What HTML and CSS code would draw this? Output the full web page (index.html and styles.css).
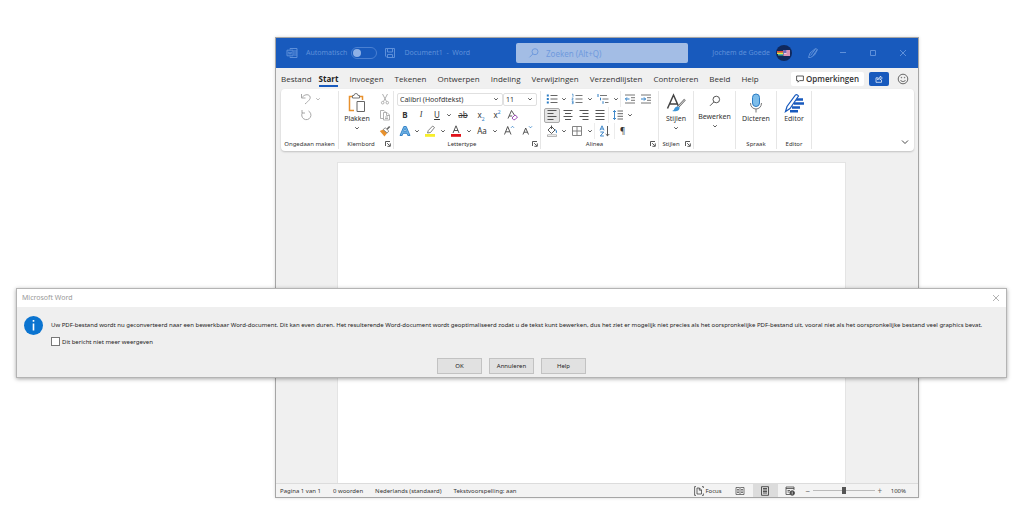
FILE: index.html
```html
<!DOCTYPE html>
<html lang="nl">
<head>
<meta charset="utf-8">
<meta name="viewport" content="width=device-width, initial-scale=1">
<title>Document1 - Word</title>
<link rel="stylesheet" href="styles.css">
</head>
<body>
<svg class="sprite" aria-hidden="true">
  <symbol id="chev" viewBox="0 0 6 6"><path d="M1.2 2.2 3 4l1.8-1.8" fill="none" stroke="currentColor" stroke-width=".8"/></symbol>
  <symbol id="launch" viewBox="0 0 6 6"><path d="M.5 5V.5H5M2.2 2.2l2.6 2.6M5.3 2.4v2.9H2.4" fill="none" stroke="#444" stroke-width=".9"/></symbol>
</svg>

<main class="desktop">
  <section class="word" aria-label="Word">
    <header class="titlebar">
      <div class="title-left">
        <svg class="i12" viewBox="0 0 12 12" fill="none" stroke="currentColor"><path d="M4 2.5V1.5h7v9H4v-1M7.5 4H11M7.5 6H11M7.5 8H11"/><path d="M1 3.200h6v5.600H1z"/><path d="m2.300 4.700.8 2.700.9-2.500.9 2.500.8-2.700" stroke-width=".8"/></svg>
        <label class="autosave" for="autosave">Automatisch</label>
        <input class="switch" id="autosave" type="checkbox">
        <svg class="i12" viewBox="0 0 12 12" fill="none" stroke="currentColor"><path d="M1.500 1.500h9v9H3l-1.500-1.500zM3.500 1.500v3.500h5V1.500M3.500 10.500V7.500h5v3"/></svg>
        <span class="docname">Document1&nbsp; -&nbsp; Word</span>
      </div>
      <label class="search">
        <svg class="i12" viewBox="0 0 12 12" fill="none" stroke="currentColor"><circle cx="7" cy="4.700" r="3"/><path d="M4.800 7 1.500 10.300"/></svg>
        <input type="text" placeholder="Zoeken (Alt+Q)" aria-label="Zoeken">
      </label>
      <div class="title-right">
        <span class="user">Jochem de Goede</span>
        <svg class="avatar" viewBox="0 0 16 16"><circle cx="8" cy="8" r="8" fill="#10285c"/><path d="M1 6h6v1.500H1z" fill="#e8493a"/><path d="M1 7.500h6V9H1z" fill="#f4df3c"/><path d="M2 9h5v1.500H2z" fill="#4bb9a5"/><path d="M7.500 5H14v6H7.500z" fill="#e7d2e6"/><path d="M7.500 5h3v3h-3z" fill="#7166b8"/><path d="M10.500 6H14M10.500 8H14M7.500 10H14" stroke="#d2527f"/></svg>
        <button class="cap" aria-label="Pen"><svg class="i12" viewBox="0 0 12 12" fill="none" stroke="currentColor"><path d="M1.500 10.500 3 6l5.500-4.500 2 1L7.500 8l-4 2.500zM3.500 8.500 8.500 2M6 8.500l4-5.500"/></svg></button>
        <button class="cap" aria-label="Minimaliseren"><svg class="i8" viewBox="0 0 8 8" fill="none" stroke="currentColor"><path d="M1 3.500h6"/></svg></button>
        <button class="cap" aria-label="Maximaliseren"><svg class="i8" viewBox="0 0 8 8" fill="none" stroke="currentColor"><path d="M1.500 1.500h5v5h-5z"/></svg></button>
        <button class="cap" aria-label="Sluiten"><svg class="i8" viewBox="0 0 8 8" fill="none" stroke="currentColor"><path d="m1 1 6 6M7 1 1 7"/></svg></button>
      </div>
    </header>

    <nav class="tabs">
      <div class="tablist">
        <a href="#bestand">Bestand</a><a href="#start" class="active">Start</a><a href="#invoegen">Invoegen</a><a href="#tekenen">Tekenen</a><a href="#ontwerpen">Ontwerpen</a><a href="#indeling">Indeling</a><a href="#verwijzingen">Verwijzingen</a><a href="#verzendlijsten">Verzendlijsten</a><a href="#controleren">Controleren</a><a href="#beeld">Beeld</a><a href="#help">Help</a>
      </div>
      <button class="comments"><svg class="i8" viewBox="0 0 8 8" fill="none" stroke="#333" stroke-width=".8"><path d="M.6 1h6.800v4.600H3.600L2 7.200V5.600H.6z"/></svg>Opmerkingen</button>
      <button class="share" aria-label="Delen"><svg class="i8" viewBox="0 0 8 8" fill="none" stroke="#fff" stroke-width=".7"><path d="M3 2.800H1v4.500h5.500V5M2.500 5c.3-1.800 1.300-2.500 2.800-2.600V1l2 2-2 2V3.700C4 3.700 3.200 4 2.500 5z"/></svg></button>
      <button class="smile" aria-label="Feedback"><svg class="i12" viewBox="0 0 12 12" fill="none" stroke="#444" stroke-width=".8"><circle cx="6" cy="6" r="4.800"/><path d="M3.500 7c.8 2 4.200 2 5 0"/><circle cx="4.400" cy="4.600" r=".3"/><circle cx="7.600" cy="4.600" r=".3"/></svg></button>
    </nav>

    <div class="ribbon">
      <section class="group g-undo">
        <div class="body stack">
          <div class="row dim">
            <button class="t16" aria-label="Ongedaan maken"><svg class="i12" viewBox="0 0 12 12" fill="none" stroke="currentColor"><path d="M1.500 1v4h4M1.800 4.800C4 1.500 8 .8 9.700 3c1.600 2.500-.7 4.500-4.700 8"/></svg></button>
            <button class="t8" aria-label="Meer"><svg class="i6"><use href="#chev"/></svg></button>
          </div>
          <div class="row dim">
            <button class="t16" aria-label="Herhalen"><svg class="i12" viewBox="0 0 12 12" fill="none" stroke="currentColor"><path d="M2 1v3h3M8.500 2A4.600 4.600 0 1 1 2.500 3.500"/></svg></button>
          </div>
        </div>
        <footer><span>Ongedaan maken</span></footer>
      </section>

      <section class="group g-clip">
        <div class="body split">
          <button class="big"><svg class="i20" viewBox="0 0 20 20" fill="none"><path d="M7 17.500H2.500v-14h3M12.500 3.500h3V7" stroke="#e8912d" stroke-width="1.500"/><path d="M5.500 5V2.500H7a2 2 0 0 1 4 0h1.500V5z" fill="#fff" stroke="#777"/><path d="M10 8.500h7.500v10H10z" fill="#fff" stroke="#666"/></svg><span>Plakken</span><svg class="i6"><use href="#chev"/></svg></button>
          <div class="stack">
            <button class="t16 dim" aria-label="Knippen"><svg class="i12" viewBox="0 0 12 12" fill="none" stroke="currentColor" stroke-width=".9"><path d="m3.500 1 4 7.500M8.500 1l-4 7.500"/><circle cx="3.700" cy="9.700" r="1.300"/><circle cx="8.300" cy="9.700" r="1.300"/></svg></button>
            <button class="t16 dim" aria-label="Kopiëren"><svg class="i12" viewBox="0 0 12 12" fill="none" stroke="currentColor" stroke-width=".9"><path d="M4.500 9.500h-3v-8H5L6.500 3M4.500 3.500h3.500L10.500 6v5h-6zM7.500 3.500V6.500h3M6 8h3M6 9.500h3"/></svg></button>
            <button class="t16" aria-label="Opmaak kopiëren"><svg class="i12" viewBox="0 0 12 12"><path d="m.8 6 3.400-1.500 4 3.500-2.700 3.500z" fill="#e8912d"/><path d="m4.200 4.500 2-1.700L9.800 6 8.200 8z" fill="#fff" stroke="#666" stroke-width=".7"/><path d="m8 4.300 2.700-2.800" stroke="#666" stroke-width="1.600"/></svg></button>
          </div>
        </div>
        <footer><span>Klembord</span><button class="launch" aria-label="Klembord openen"><svg class="i6"><use href="#launch"/></svg></button></footer>
      </section>

      <section class="group g-font">
        <div class="body stack">
          <div class="row combos">
            <span class="combo wide"><select aria-label="Lettertype"><option>Calibri (Hoofdtekst)</option></select><svg class="i6"><use href="#chev"/></svg></span>
            <span class="combo"><select aria-label="Tekengrootte"><option>11</option></select><svg class="i6"><use href="#chev"/></svg></span>
          </div>
          <div class="row">
            <button class="t16"><b>B</b></button>
            <button class="t16 serif"><i>I</i></button>
            <button class="t16"><u>U</u></button>
            <button class="t8" aria-label="Onderstreping"><svg class="i6"><use href="#chev"/></svg></button>
            <button class="t20"><s>ab</s></button>
            <button class="t16"><span>x<sub>2</sub></span></button>
            <button class="t16"><span>x<sup>2</sup></span></button>
            <button class="t16" aria-label="Opmaak wissen"><svg class="i12" viewBox="0 0 12 12" fill="none"><path d="M1 9.500 4.500 1.500 8 7M2.200 7h3" stroke="#444" stroke-width=".9"/><path d="m5 9 3-3 2.500 2L8 10.700H6.500z" fill="#fff" stroke="#9a4bb5"/></svg></button>
          </div>
          <div class="row">
            <button class="t16" aria-label="Teksteffecten"><svg class="i12" viewBox="0 0 12 12"><path d="M1 10.500 4.800 1.500h2.400l3.800 9H8.800L8 8.300H4L3.200 10.500z" fill="#6fb4e6" stroke="#2b7cc4" stroke-width=".9"/><path d="M4.700 6.500 6 3.500l1.300 3z" fill="#fff" stroke="#2b7cc4" stroke-width=".7"/></svg></button>
            <button class="t8" aria-label="Meer effecten"><svg class="i6"><use href="#chev"/></svg></button>
            <button class="t18" aria-label="Markeren"><svg class="i12" viewBox="0 0 12 12"><path d="M1 9h10v2.800H1z" fill="#f7ee2b"/><path d="m3.500 8 .8-2.500L8.700 1l1.800 1.500-4 5z" fill="#fff" stroke="#666" stroke-width=".8"/></svg></button>
            <button class="t8" aria-label="Markeerkleur"><svg class="i6"><use href="#chev"/></svg></button>
            <button class="t18" aria-label="Tekstkleur"><svg class="i12" viewBox="0 0 12 12"><path d="M1 9h10v2.800H1z" fill="#e0131b"/><path d="M3 8 6 .8 9 8M4 5.500h4" fill="none" stroke="#444" stroke-width=".9"/></svg></button>
            <button class="t8" aria-label="Kleur kiezen"><svg class="i6"><use href="#chev"/></svg></button>
            <button class="t18">Aa</button>
            <button class="t8" aria-label="Hoofdlettergebruik"><svg class="i6"><use href="#chev"/></svg></button>
            <button class="t20" aria-label="Groter"><svg class="i12" viewBox="0 0 12 12" fill="none"><path d="M1.500 9.500 4.700 1.500 8 9.500M2.700 6.800h4" stroke="#444" stroke-width=".9"/><path d="m8 2.800 1.500-1.500L11 2.800" stroke="#2b7cc4" stroke-width=".8"/></svg></button>
            <button class="t16" aria-label="Kleiner"><svg class="i12" viewBox="0 0 12 12" fill="none"><path d="M2 9.500 4.700 3l2.800 6.500M3 7.200h3.500" stroke="#444" stroke-width=".9"/><path d="m8 1.300 1.500 1.500L11 1.300" stroke="#2b7cc4" stroke-width=".8"/></svg></button>
          </div>
        </div>
        <footer><span>Lettertype</span><button class="launch" aria-label="Lettertype openen"><svg class="i6"><use href="#launch"/></svg></button></footer>
      </section>

      <section class="group g-para">
        <div class="body stack">
          <div class="row">
            <button class="t16" aria-label="Opsommingstekens"><svg class="i12" viewBox="0 0 12 12"><path d="M4.500 2.500h7M4.500 6h7M4.500 9.500h7" stroke="#666"/><path d="M.8 1.500h2v2h-2zM.8 5h2v2h-2zM.8 8.500h2v2h-2z" fill="#2b7cc4"/></svg></button>
            <button class="t8" aria-label="Meer opsommingstekens"><svg class="i6"><use href="#chev"/></svg></button>
            <button class="t18" aria-label="Nummering"><svg class="i12" viewBox="0 0 12 12"><path d="M4.500 2.500h7M4.500 6h7M4.500 9.500h7" stroke="#777"/><path d="M1 1.200h1v2.600M.8 5h1.400L.9 7h1.500M.8 8.300h1.400v2.400H.8M1 9.500h1" stroke="#2b7cc4" stroke-width=".7" fill="none"/></svg></button>
            <button class="t8" aria-label="Meer nummering"><svg class="i6"><use href="#chev"/></svg></button>
            <button class="t18" aria-label="Lijst met meerdere niveaus"><svg class="i12" viewBox="0 0 12 12"><path d="M3 2.500h7M5.500 6h6M8 9.500h3.500" stroke="#777"/><path d="M1 1v3M3.500 4.700v2.600M6 8.200v2.600" stroke="#2b7cc4"/></svg></button>
            <button class="t8" aria-label="Meer niveaus"><svg class="i6"><use href="#chev"/></svg></button>
            <button class="t18 rule" aria-label="Inspringing verkleinen"><svg class="i12" viewBox="0 0 12 12" fill="none"><path d="M1 2h10M7 4.700h4M7 7.300h4M1 10h10" stroke="#777"/><path d="M5.500 6H1.500M3 4.400 1.400 6 3 7.600" stroke="#2b7cc4"/></svg></button>
            <button class="t16" aria-label="Inspringing vergroten"><svg class="i12" viewBox="0 0 12 12" fill="none"><path d="M1 2h10M7 4.700h4M7 7.300h4M1 10h10" stroke="#777"/><path d="M1 6h4.500M4 4.400 5.600 6 4 7.600" stroke="#2b7cc4"/></svg></button>
          </div>
          <div class="row">
            <button class="t16 pressed" aria-label="Links uitlijnen"><svg class="i12" viewBox="0 0 12 12" stroke="#555"><path d="M1.500 1.500h9M1.500 4.500h6M1.500 7.500h9M1.500 10.500h6"/></svg></button>
            <button class="t16" aria-label="Centreren"><svg class="i12" viewBox="0 0 12 12" stroke="#555"><path d="M1.500 1.500h9M3 4.500h6M1.500 7.500h9M3 10.500h6"/></svg></button>
            <button class="t16" aria-label="Rechts uitlijnen"><svg class="i12" viewBox="0 0 12 12" stroke="#555"><path d="M1.500 1.500h9M4.500 4.500h6M1.500 7.500h9M4.500 10.500h6"/></svg></button>
            <button class="t16" aria-label="Uitvullen"><svg class="i12" viewBox="0 0 12 12" stroke="#555"><path d="M1.500 1.500h9M1.500 4.500h9M1.500 7.500h9M1.500 10.500h9"/></svg></button>
            <button class="t18 rule" aria-label="Regelafstand"><svg class="i12" viewBox="0 0 12 12" fill="none"><path d="M5.500 2H11M5.500 4.700H11M5.500 7.300H11M5.500 10H11" stroke="#666"/><path d="M2.500 1.500v9M1 3l1.500-1.500L4 3M1 9l1.500 1.500L4 9" stroke="#2b7cc4" stroke-width=".9"/></svg></button>
            <button class="t8" aria-label="Meer regelafstand"><svg class="i6"><use href="#chev"/></svg></button>
          </div>
          <div class="row">
            <button class="t16" aria-label="Arcering"><svg class="i12" viewBox="0 0 12 12" fill="none"><path d="M1.500 9.800h9v1.700h-9z" fill="#fff" stroke="#888" stroke-width=".6"/><path d="m2 5 3.500-3.500L9 5 5.500 8.500zM5.500 4V.5" stroke="#444" stroke-width=".9"/><path d="M9.500 4.500c1.500 2 1 3.500.5 3.500" stroke="#2b7cc4"/></svg></button>
            <button class="t8" aria-label="Arceringskleur"><svg class="i6"><use href="#chev"/></svg></button>
            <button class="t18" aria-label="Randen"><svg class="i12" viewBox="0 0 12 12" fill="none" stroke="#777" stroke-width=".9"><path d="M1.500 1.500h9v9h-9zM6 1.500v9M1.500 6h9"/></svg></button>
            <button class="t8" aria-label="Meer randen"><svg class="i6"><use href="#chev"/></svg></button>
            <button class="t20 rule" aria-label="Sorteren"><svg class="i12" viewBox="0 0 12 12" fill="none"><path d="M1 5.300 3 .8l2 4.500M1.700 4h2.600M1.300 7h3.400L1.300 11h3.600" stroke="#2b7cc4" stroke-width=".9"/><path d="M8.500 1v9.700M6.700 9l1.800 1.800L10.300 9" stroke="#444" stroke-width=".9"/></svg></button>
            <button class="t16 rule">¶</button>
          </div>
        </div>
        <footer><span>Alinea</span><button class="launch" aria-label="Alinea openen"><svg class="i6"><use href="#launch"/></svg></button></footer>
      </section>

      <section class="group g-style">
        <div class="body"><button class="big"><svg class="i20" viewBox="0 0 20 20" fill="none"><path d="M1.500 15.500 7.500 2l5.300 12M3.700 11h7.700" stroke="#444" stroke-width="1.500"/><path d="M19 6.500 12 14" stroke="#666" stroke-width="2.200"/><path d="M19 6.500 12 14" stroke="#fff" stroke-width=".8"/><path d="M13.500 14.500c.5 3-3 4.500-7.500 3.500 2-.5 2-2 3.200-3.500 1.300-1.400 3.500-1.200 4.300 0z" fill="#3d94d6"/></svg><span>Stijlen</span><svg class="i6"><use href="#chev"/></svg></button></div>
        <footer><span>Stijlen</span><button class="launch" aria-label="Stijlen openen"><svg class="i6"><use href="#launch"/></svg></button></footer>
      </section>
      <section class="group g-edit">
        <div class="body"><button class="big small"><svg class="i12" viewBox="0 0 12 12" fill="none" stroke="#444" stroke-width=".9"><circle cx="7.300" cy="4.500" r="3.300"/><path d="M4.900 6.900 1 10.800"/></svg><span>Bewerken</span><svg class="i6"><use href="#chev"/></svg></button></div>
        <footer></footer>
      </section>
      <section class="group g-talk">
        <div class="body"><button class="big"><svg class="i20" viewBox="0 0 20 20" fill="none"><rect x="6.500" y="1" width="7" height="12.500" rx="3.500" fill="#7dbdea" stroke="#2b7cc4"/><path d="M4.500 10c0 8 11 8 11 0M10 16v3.500" stroke="#777"/></svg><span>Dicteren</span></button></div>
        <footer><span>Spraak</span></footer>
      </section>
      <section class="group g-editor">
        <div class="body"><button class="big"><svg class="i20" viewBox="0 0 20 20" fill="none"><path d="M12 6.500h7M10 10.500h10M8 14.500h8M6 18.300h8" stroke="#185abd" stroke-width="2.600"/><path d="M1.500 18.500 3 13.500 11.500 2q1.500-1 3 1L6 15.500z" fill="#fff" stroke="#185abd" stroke-width="1.200"/></svg><span>Editor</span></button></div>
        <footer><span>Editor</span></footer>
      </section>
      <button class="collapse" aria-label="Lint samenvouwen"><svg class="i8" viewBox="0 0 8 8" fill="none" stroke="#333" stroke-width=".9"><path d="m1 2.500 3 3 3-3"/></svg></button>
    </div>

    <div class="canvas"><div class="page"></div></div>

    <footer class="status">
      <span>Pagina 1 van 1</span><span>0 woorden</span><span>Nederlands (standaard)</span><span>Tekstvoorspelling: aan</span>
      <div class="status-right">
        <button class="focus"><svg class="i10" viewBox="0 0 10 10" fill="none" stroke="#444" stroke-width=".8"><path d="M2 .6H.6V9.400H2M8 9.400h1.400V7.500M8 .6h1.400V2M3 2h2.500L7.500 4v4H3zM5.300 2v2.200h2.200"/></svg>Focus</button>
        <button class="view" aria-label="Leesmodus"><svg class="i10" viewBox="0 0 10 10" fill="none" stroke="#555" stroke-width=".8"><path d="M1 1.500h3.500L5 2l.5-.5H9v7H5.500L5 9l-.5-.5H1zM5 2v7M2 3.500h2M2 5h2M2 6.500h2M6 3.500h2M6 5h2M6 6.500h2"/></svg></button>
        <button class="view on" aria-label="Afdrukweergave"><svg class="i10" viewBox="0 0 10 10" fill="none" stroke="#444" stroke-width=".9"><path d="M1.500.7h7v8.600h-7zM3 2.500h4M3 4h4M3 5.500h4M3 7h4"/></svg></button>
        <button class="view" aria-label="Weblay-out"><svg class="i10" viewBox="0 0 10 10" fill="none" stroke="#444" stroke-width=".8"><path d="M5 8.500H1v-7.500h8v3M1 2.500h8M2.500 4.500h2.500M2.500 6h2"/><circle cx="7.200" cy="7" r="2.300" fill="#444"/><path d="M7.200 5.500v3" stroke="#ddd"/></svg></button>
        <button class="zoom" aria-label="Uitzoomen">−</button>
        <input class="slider" type="range" min="0" max="100" value="50" aria-label="Zoom">
        <button class="zoom" aria-label="Inzoomen">+</button>
        <span class="pct">100%</span>
      </div>
    </footer>
  </section>

  <section class="dialog" role="dialog" aria-label="Microsoft Word">
    <header class="dlg-title"><span>Microsoft Word</span><button class="dlg-close" aria-label="Sluiten"><svg class="i8" viewBox="0 0 8 8" fill="none" stroke="#aaa" stroke-width=".9"><path d="m1 1 6 6M7 1 1 7"/></svg></button></header>
    <div class="dlg-main">
      <svg class="info" viewBox="0 0 19 19"><circle cx="9.500" cy="9.500" r="9.500" fill="#0b74d0"/><path d="M9.500 7.500v7M9.500 4v1.800" stroke="#fff" stroke-width="1.600"/></svg>
      <div class="dlg-text">
        <p>Uw PDF-bestand wordt nu geconverteerd naar een bewerkbaar Word-document. Dit kan even duren. Het resulterende Word-document wordt geoptimaliseerd zodat u de tekst kunt bewerken, dus het ziet er mogelijk niet precies als het oorspronkelijke PDF-bestand uit, vooral niet als het oorspronkelijke bestand veel graphics bevat.</p>
        <label class="check"><input type="checkbox">Dit bericht niet meer weergeven</label>
      </div>
    </div>
    <div class="dlg-actions"><button>OK</button><button>Annuleren</button><button>Help</button></div>
  </section>
</main>
</body>
</html>
```
FILE: styles.css
```css
* { box-sizing: border-box; }
body { margin: 0; background: #fff; color: #333; font: 6px/8px "Noto Sans", "Open Sans", sans-serif; }
button, input, select { font: inherit; color: inherit; margin: 0; padding: 0; border: 0; background: none; }
button { display: flex; align-items: center; justify-content: center; }
svg { display: block; flex: none; overflow: visible; }
.sprite { position: absolute; width: 0; height: 0; }
.i6 { width: 6px; height: 6px; }
.i8 { width: 8px; height: 8px; }
.i10 { width: 10px; height: 10px; }
.i12 { width: 12px; height: 12px; }
.i20 { width: 20px; height: 20px; }

.desktop { position: relative; display: flex; min-height: 100vh; padding: 37px 105px 28px 275px; overflow: hidden; }
.word { flex: 1; min-width: 0; display: flex; flex-direction: column; background: #f0f0f0; border: 1px solid #a6a6a6; box-shadow: 0 0 3px rgba(0,0,0,.15); }

.titlebar { display: grid; grid-template-columns: 1fr 172px 1fr; align-items: center; height: 30px; padding-left: 10px; background: #185abd; color: #5e90da; font-size: 7px; }
.title-left, .title-right { display: flex; align-items: center; white-space: nowrap; }
.autosave { margin-left: 8px; }
.switch { appearance: none; width: 26px; height: 12px; margin: 0 7px 0 4px; border: 1px solid #4a80d2; border-radius: 6px; display: flex; align-items: center; }
.switch::before { content: ""; width: 8px; height: 8px; margin-left: 1px; border-radius: 4px; background: #8fb1e6; }
.docname { margin-left: 8px; }
.search { display: flex; align-items: center; gap: 6px; height: 20px; padding: 0 12px; border-radius: 2px; background: #a3bde5; color: #6f9add; }
.search input { flex: 1; min-width: 0; font-size: 8px; }
.search input::placeholder { color: #6f9add; opacity: 1; }
.title-right { justify-content: flex-end; }
.avatar { width: 16px; height: 16px; margin: 0 6px 0 6px; }
.cap { width: 30px; height: 30px; }

.tabs { display: flex; align-items: center; height: 21px; padding: 0 9px 0 5px; font-family: "Open Sans", "Noto Sans", sans-serif; font-size: 8px; line-height: 12px; }
.tablist { display: flex; flex: 1; gap: 11px; }
.tabs a { color: #333; text-decoration: none; border-bottom: 2px solid transparent; padding-top: 2px; }
.tabs a:first-child { margin-right: -4px; }
.tabs a.active { font-weight: 700; border-color: #185abd; color: #222; }
.comments { height: 14px; gap: 2px; padding: 0 5px; background: #fff; border-radius: 2px; font-weight: 600; }
.share { width: 20px; height: 14px; margin: 0 8px 0 5px; border-radius: 2px; background: #185abd; }

.ribbon { display: flex; height: 62px; margin: 0 4px 0 5px; background: #fff; border-radius: 4px; box-shadow: 0 1px 2px rgba(0,0,0,.2); }
.group { display: flex; flex-direction: column; flex: none; margin: 2px 0; border-right: 1px solid #e6e6e6; }
.g-undo { width: 58px; }
.g-clip { width: 55px; }
.g-font { width: 147px; }
.g-para { width: 118px; }
.g-style { width: 35px; }
.g-edit { width: 42px; }
.g-talk { width: 41px; }
.g-editor { width: 35px; }
.body { flex: 1; }
.stack { display: flex; flex-direction: column; }
.split { display: flex; justify-content: space-between; padding-left: 2px; }
.group footer { display: flex; align-items: center; justify-content: center; height: 10px; white-space: nowrap; }
.group footer span { flex: 1; text-align: center; }
.launch { width: 10px; height: 8px; }
.row { display: flex; align-items: center; height: 16px; padding-left: 3px; font-size: 8px; }
.g-undo .row { padding-left: 17px; }
.t8, .t16, .t18, .t20 { height: 16px; flex: none; white-space: nowrap; }
.t8 { width: 8px; }
.t16 { width: 16px; }
.t18 { width: 18px; }
.t20 { width: 20px; }
.dim { color: #a8a8a8; }
.serif { font-family: "Liberation Serif", serif; }
.rule { border-left: 1px solid #ececec; }
.pressed { height: 15px; background: #e6e6e6; border: 1px solid #aaa; border-radius: 2px; }
sub, sup { font-size: 5px; line-height: 0; color: #2b7cc4; }
.combo { display: flex; align-items: center; width: 34px; height: 13px; padding: 0 3px 0 2px; border: 1px solid #e0e0e0; border-radius: 2px; }
.combo.wide { width: 106px; }
.combo select { appearance: none; flex: 1; min-width: 0; height: 11px; font-size: 7px; line-height: 11px; }
.big { flex-direction: column; justify-content: flex-start; width: 100%; padding-top: 2px; font-size: 7px; line-height: 10px; white-space: nowrap; }
.split .big { width: 32px; }
.big span { margin: 1px 0; }
.big.small { padding-top: 4px; }
.small span { margin-top: 5px; }
.collapse { align-self: flex-end; width: 18px; height: 18px; margin-left: auto; }

.canvas { flex: 1; display: flex; padding: 11px 72px 0 61px; }
.page { flex: 1; background: #fff; border: 1px solid #e4e4e4; border-bottom: 0; }

.status { display: flex; align-items: center; gap: 12px; height: 14px; padding-left: 4px; background: #f3f3f3; border-top: 1px solid #dcdcdc; white-space: nowrap; }
.status-right { display: flex; align-items: center; height: 100%; margin-left: auto; padding-right: 12px; }
.focus { gap: 1px; margin-right: 6px; }
.view { width: 25px; height: 100%; }
.view.on { background: #dcdcdc; }
.zoom { width: 10px; font-size: 8px; color: #666; }
.slider { appearance: none; width: 62px; height: 8px; background: linear-gradient(#bbb, #bbb) center / 100% 1px no-repeat; }
.slider::-webkit-slider-thumb { appearance: none; width: 4px; height: 7px; background: #555; }
.pct { margin-left: 6px; }

.dialog { position: absolute; left: 16px; right: 17px; top: 288px; background: #efefef; border: 1px solid #b4b4b4; box-shadow: 0 1px 4px rgba(0,0,0,.35); }
.dlg-title { display: flex; align-items: center; justify-content: space-between; height: 18px; padding: 0 6px 0 5px; background: #fff; color: #999; font-size: 7px; }
.dlg-main { display: flex; align-items: flex-start; gap: 8px; padding: 9px 4px 0 7px; }
.info { width: 19px; height: 19px; }
.dlg-text { flex: 1; min-width: 0; padding-top: 5px; }
.dlg-text p { margin: 0 0 8px; white-space: nowrap; color: #222; }
.check { display: flex; align-items: center; gap: 2px; color: #222; }
.check input { appearance: none; width: 9px; height: 9px; background: #fff; border: 1px solid #777; }
.dlg-actions { display: flex; justify-content: center; gap: 7px; padding: 12px 0 3px; }
.dlg-actions button { width: 45px; height: 16px; background: #e1e1e1; border: 1px solid #c2c2c2; color: #222; }
```
